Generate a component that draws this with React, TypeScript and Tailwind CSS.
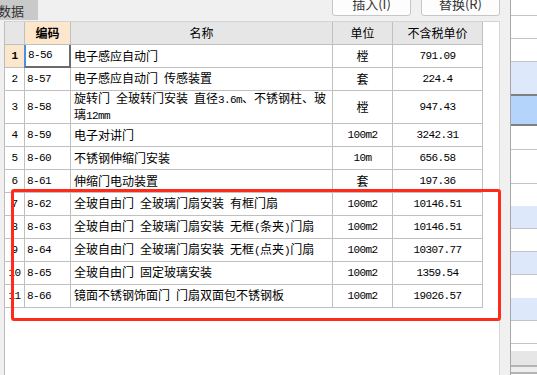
import { Fragment } from 'react';

type Row = {
  n: string;
  code: string;
  name: string[];
  unit: string;
  price: string;
  tall?: boolean;
};

const rows: Row[] = [
  { n: '1', code: '8-56', name: ['电子感应自动门'], unit: '樘', price: '791.09' },
  { n: '2', code: '8-57', name: ['电子感应自动门 传感装置'], unit: '套', price: '224.4' },
  {
    n: '3',
    code: '8-58',
    name: ['旋转门 全玻转门安装 直径3.6m、不锈钢柱、玻', '璃12mm'],
    unit: '樘',
    price: '947.43',
    tall: true
  },
  { n: '4', code: '8-59', name: ['电子对讲门'], unit: '100m2', price: '3242.31' },
  { n: '5', code: '8-60', name: ['不锈钢伸缩门安装'], unit: '10m', price: '656.58' },
  { n: '6', code: '8-61', name: ['伸缩门电动装置'], unit: '套', price: '197.36' },
  { n: '7', code: '8-62', name: ['全玻自由门 全玻璃门扇安装 有框门扇'], unit: '100m2', price: '10146.51' },
  { n: '8', code: '8-63', name: ['全玻自由门 全玻璃门扇安装 无框(条夹)门扇'], unit: '100m2', price: '10146.51' },
  { n: '9', code: '8-64', name: ['全玻自由门 全玻璃门扇安装 无框(点夹)门扇'], unit: '100m2', price: '10307.77' },
  { n: '10', code: '8-65', name: ['全玻自由门 固定玻璃安装'], unit: '100m2', price: '1359.54' },
  { n: '11', code: '8-66', name: ['镜面不锈钢饰面门 门扇双面包不锈钢板'], unit: '100m2', price: '19026.57' }
];

// right-hand list strips, top to bottom
const sideRows = [
  { h: 'h-[15px]', c: 'bg-white' },
  { h: 'h-[23px]', c: 'bg-white border-t border-[#c4c4c4]' },
  { h: 'h-[23px]', c: 'bg-white border-t border-[#c4c4c4]' },
  { h: 'h-[33px]', c: 'bg-[#dde8fa] border-t border-[#c4c4c4]' },
  { h: 'h-[32px]', c: 'bg-[#b4d4fb] border-y-2 border-[#808080]' },
  { h: 'h-[23px]', c: 'bg-white' },
  { h: 'h-[34px]', c: 'bg-white border-t border-[#c4c4c4]' },
  { h: 'h-[23px]', c: 'bg-white border-t border-[#c4c4c4]' },
  { h: 'h-[22px]', c: 'bg-[#dde8fa]' },
  { h: 'h-[23px]', c: 'bg-white border-t border-[#c4c4c4]' },
  { h: 'h-[23px]', c: 'bg-[#dde8fa] border-t border-[#c4c4c4]' },
  { h: 'h-[24px]', c: 'bg-white border-t border-[#c4c4c4]' },
  { h: 'h-[22px]', c: 'bg-[#dde8fa]' },
  { h: 'h-[23px]', c: 'bg-white border-t border-[#c4c4c4]' },
  { h: 'h-[8px]', c: 'bg-white border-t border-[#c4c4c4]' },
  { h: 'h-[14px]', c: 'bg-[#e6e6e6]' },
  { h: 'h-[7px]', c: 'bg-[#eeeeee] border-t-2 border-[#b4b4b4]' },
  { h: 'h-[10px]', c: 'bg-white border-t-2 border-[#b4b4b4]' }
];

const mono = "font-['Liberation_Mono',monospace] text-[11px] tracking-[-0.6px]";

function Mixed({ text }: { text: string }) {
  const parts = text.match(/[\x20-\x7e]+|[^\x20-\x7e]+/g) ?? [];
  return (
    <>
      {parts.map((p, i) =>
        /^[\x20-\x7e]+$/.test(p) ? (
          <span key={i} className={mono}>
            {p}
          </span>
        ) : (
          <span key={i}>{p}</span>
        )
      )}
    </>
  );
}

const cell = 'border-r border-b border-[#c0c0c0] flex items-center';

export default function App() {
  return (
    <div className="w-[537px] h-[375px] overflow-hidden flex bg-[#f0f0f0] font-['Noto_Sans_CJK_SC',sans-serif] text-[12px] text-black">
      <div className="w-[510px] flex flex-col">
        {/* toolbar */}
        <div className="h-[21px] flex items-start shrink-0">
          <div className="w-[38px] h-[20px] bg-[#c9c9c9] flex items-center pl-0 -indent-[2px] text-[13px] text-[#333] leading-none">
            数据
          </div>
          <button className="ml-[294px] -mt-[9px] w-[79px] h-[25px] rounded-[3px] border border-[#c6c6c6] bg-[#fdfdfd] text-[13px] text-[#333] leading-none">
            插入(I)
          </button>
          <button className="ml-[10px] -mt-[9px] w-[79px] h-[25px] rounded-[3px] border border-[#c6c6c6] bg-[#fdfdfd] text-[13px] text-[#333] leading-none">
            替换(R)
          </button>
        </div>

        {/* table panel */}
        <div className="relative ml-[4px] mr-[10px] flex-1 bg-white border-l border-[#bdbdbd] border-t border-r border-t-[#d4d4d4] border-r-[#d8d8d8]">
          <div className="grid grid-cols-[20px_46px_262px_60px_90px] w-[478px]">
            {/* header */}
            <div className={`${cell} h-[23px] bg-[#e6e6e6]`} />
            <div className={`${cell} h-[23px] bg-[#fde7cc] justify-center font-bold`}>编码</div>
            <div className={`${cell} h-[23px] bg-[#e6e6e6] justify-center`}>名称</div>
            <div className={`${cell} h-[23px] bg-[#e6e6e6] justify-center`}>单位</div>
            <div className={`${cell} h-[23px] bg-[#e6e6e6] justify-center`}>不含税单价</div>

            {rows.map((r, i) => {
              const h = r.tall ? 'h-[33px]' : 'h-[23px]';
              const first = i === 0;
              return (
                <Fragment key={r.code}>
                  <div
                    className={`${cell} ${h} justify-center ${mono} ${
                      first ? 'bg-[#fde7cc] font-bold' : ''
                    }`}
                  >
                    {r.n}
                  </div>
                  <div
                    className={`${h} flex items-center pl-[2px] ${mono} ${
                      first
                        ? 'border-l-2 border-l-[#4a90e2] border-r-2 border-r-[#6b6b6b] border-b-2 border-b-[#6b6b6b] -ml-[1px]'
                        : 'border-r border-b border-[#c0c0c0]'
                    }`}
                  >
                    {r.code}
                  </div>
                  <div className={`${cell} ${h} pl-[3px]`}>
                    <div className="leading-[14px]">
                      {r.name.map((line, j) => (
                        <div key={j}>
                          <Mixed text={line} />
                        </div>
                      ))}
                    </div>
                  </div>
                  <div className={`${cell} ${h} justify-center`}>
                    <Mixed text={r.unit} />
                  </div>
                  <div className={`${cell} ${h} justify-center ${mono}`}>{r.price}</div>
                </Fragment>
              );
            })}
          </div>

          {/* red highlight */}
          <div className="absolute left-[6px] top-[167px] w-[490px] h-[132px] border-[3px] border-[#ff2a1a] rounded-[3px]" />
        </div>
      </div>

      {/* right list */}
      <div className="flex-1 border-l border-[#a6a6a6] flex flex-col bg-white">
        {sideRows.map((s, i) => (
          <div key={i} className={`${s.h} ${s.c} shrink-0`} />
        ))}
      </div>
    </div>
  );
}
